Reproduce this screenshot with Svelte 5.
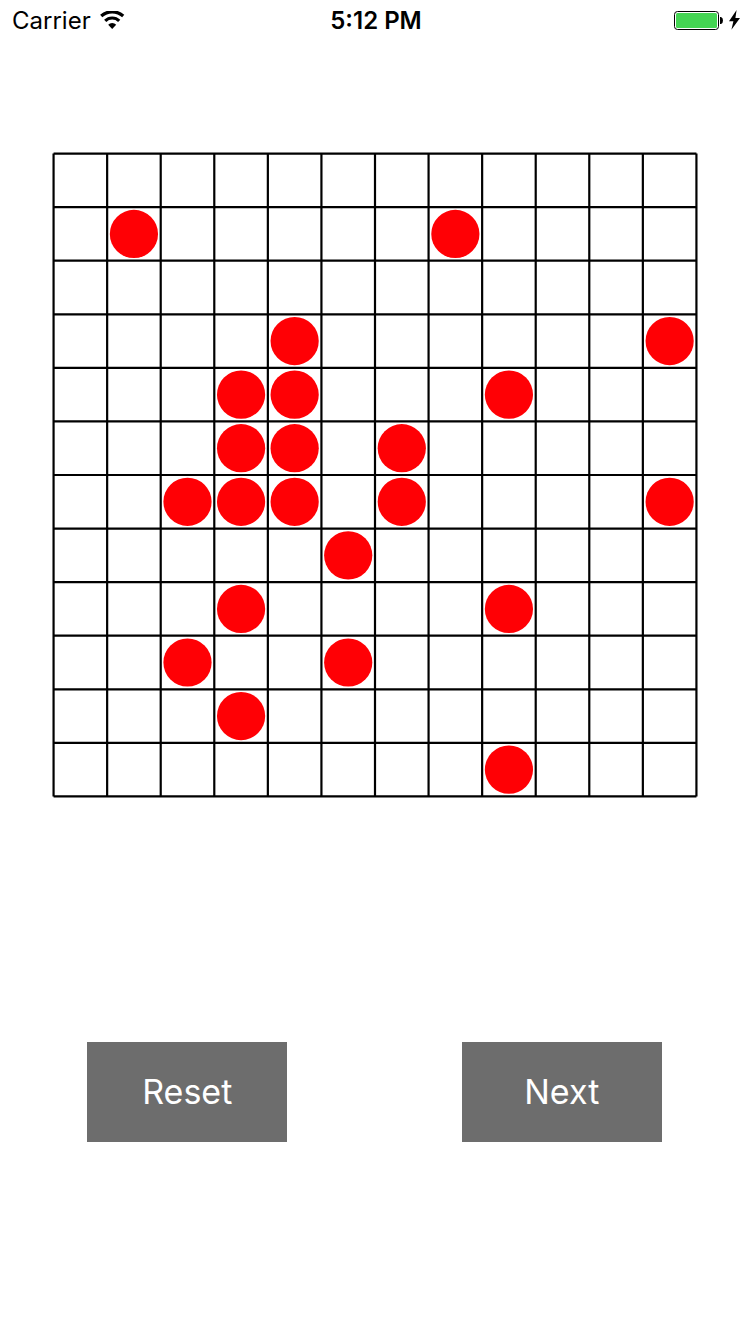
<script>
  const SIZE = 12;
  const BOARD = 750;
  const CELL = BOARD / (SIZE + 2);
  const END = BOARD - CELL;
  const lines = Array.from({ length: SIZE + 1 }, (_, i) => (i + 1) * CELL);

  // Live columns for each row of the opening generation.
  const seed = [
    [], [1, 7], [], [4, 11], [3, 4, 8], [3, 4, 6],
    [2, 3, 4, 6, 11], [5], [3, 8], [2, 5], [3], [8]
  ];

  const start = () => seed.flatMap((cols, row) => cols.map((col) => ({ row, col })));
  let cells = $state(start());

  function reset() {
    cells = start();
  }

  function next() {
    const alive = new Set(cells.map((c) => c.row * SIZE + c.col));
    const out = [];
    for (let row = 0; row < SIZE; row++) {
      for (let col = 0; col < SIZE; col++) {
        let n = 0;
        for (let r = Math.max(0, row - 1); r <= Math.min(SIZE - 1, row + 1); r++) {
          for (let c = Math.max(0, col - 1); c <= Math.min(SIZE - 1, col + 1); c++) {
            if ((r !== row || c !== col) && alive.has(r * SIZE + c)) n++;
          }
        }
        if (n === 3 || (n === 2 && alive.has(row * SIZE + col))) out.push({ row, col });
      }
    }
    cells = out;
  }
</script>

<div class="screen">
  <header>
    <div class="carrier">
      <span>Carrier</span>
      <svg width="25" height="20" viewBox="0 0 25 20" aria-hidden="true">
        <path d="M1.2 5 A16.5 16.5 0 0 1 23.2 5" fill="none" stroke="#000" stroke-width="3.2" />
        <path d="M5.2 9.9 A9.8 9.8 0 0 1 19.2 9.9" fill="none" stroke="#000" stroke-width="3.1" />
        <path d="M8.2 13.7 A5.4 5.4 0 0 1 16.2 13.7 L12.2 18 Z" fill="#000" />
      </svg>
    </div>
    <span class="time">5:12 PM</span>
    <div class="power">
      <svg width="50" height="20" viewBox="0 0 50 20" aria-hidden="true">
        <rect x="0.5" y="0.5" width="44" height="18" rx="3" fill="#fff" stroke="#000" />
        <rect x="2" y="2" width="41" height="15" rx="1.5" fill="#44d553" />
        <path d="M46 6 h1 q2 0.6 2 3.5 t-2 3.5 h-1 z" fill="#000" />
      </svg>
      <svg width="11" height="22" viewBox="0 0 11 22" aria-hidden="true">
        <path d="M7.6 0 L0 11.2 H4.4 L2.4 19.8 L11 8 H6.4 Z" fill="#000" />
      </svg>
    </div>
  </header>

  <main>
    <svg class="board" viewBox="0 0 {BOARD} {BOARD}" role="img" aria-label="Board">
      <g stroke="#000" stroke-width="2.2">
        {#each lines as p}
          <line x1={p} y1={CELL} x2={p} y2={END} />
          <line x1={CELL} y1={p} x2={END} y2={p} />
        {/each}
      </g>
      <g fill="#ff0005">
        {#each cells as c (c.row * SIZE + c.col)}
          <circle cx={(c.col + 1.5) * CELL} cy={(c.row + 1.5) * CELL} r={CELL * 0.45} />
        {/each}
      </g>
    </svg>

    <div class="actions">
      <button type="button" onclick={reset}>Reset</button>
      <button type="button" onclick={next}>Next</button>
    </div>
  </main>
</div>

<style>
  :global(body) {
    background: #fff;
  }

  .screen {
    color: #000;
    font-family: Inter, "Liberation Sans", sans-serif;
  }

  header {
    display: grid;
    grid-template-columns: 1fr auto 1fr;
    align-items: center;
    height: 42px;
    padding: 0 10px 0 12px;
    font-size: 24px;
    line-height: 42px;
  }

  .carrier,
  .power {
    display: flex;
    align-items: center;
    gap: 9px;
  }

  .power {
    justify-content: flex-end;
    gap: 5px;
  }

  .time {
    font-weight: 600;
  }

  main {
    padding-top: 58px;
  }

  .board {
    display: block;
    width: 100%;
  }

  .actions {
    display: grid;
    grid-template-columns: 1fr 1fr;
    justify-items: center;
    padding: 192px 1px 0 0;
  }

  button {
    width: 200px;
    height: 100px;
    padding: 0;
    border: 0;
    border-radius: 0;
    background: #6d6d6d;
    color: #fff;
    font-family: inherit;
    font-size: 34px;
    font-weight: 400;
    line-height: 44px;
    cursor: pointer;
  }
</style>
